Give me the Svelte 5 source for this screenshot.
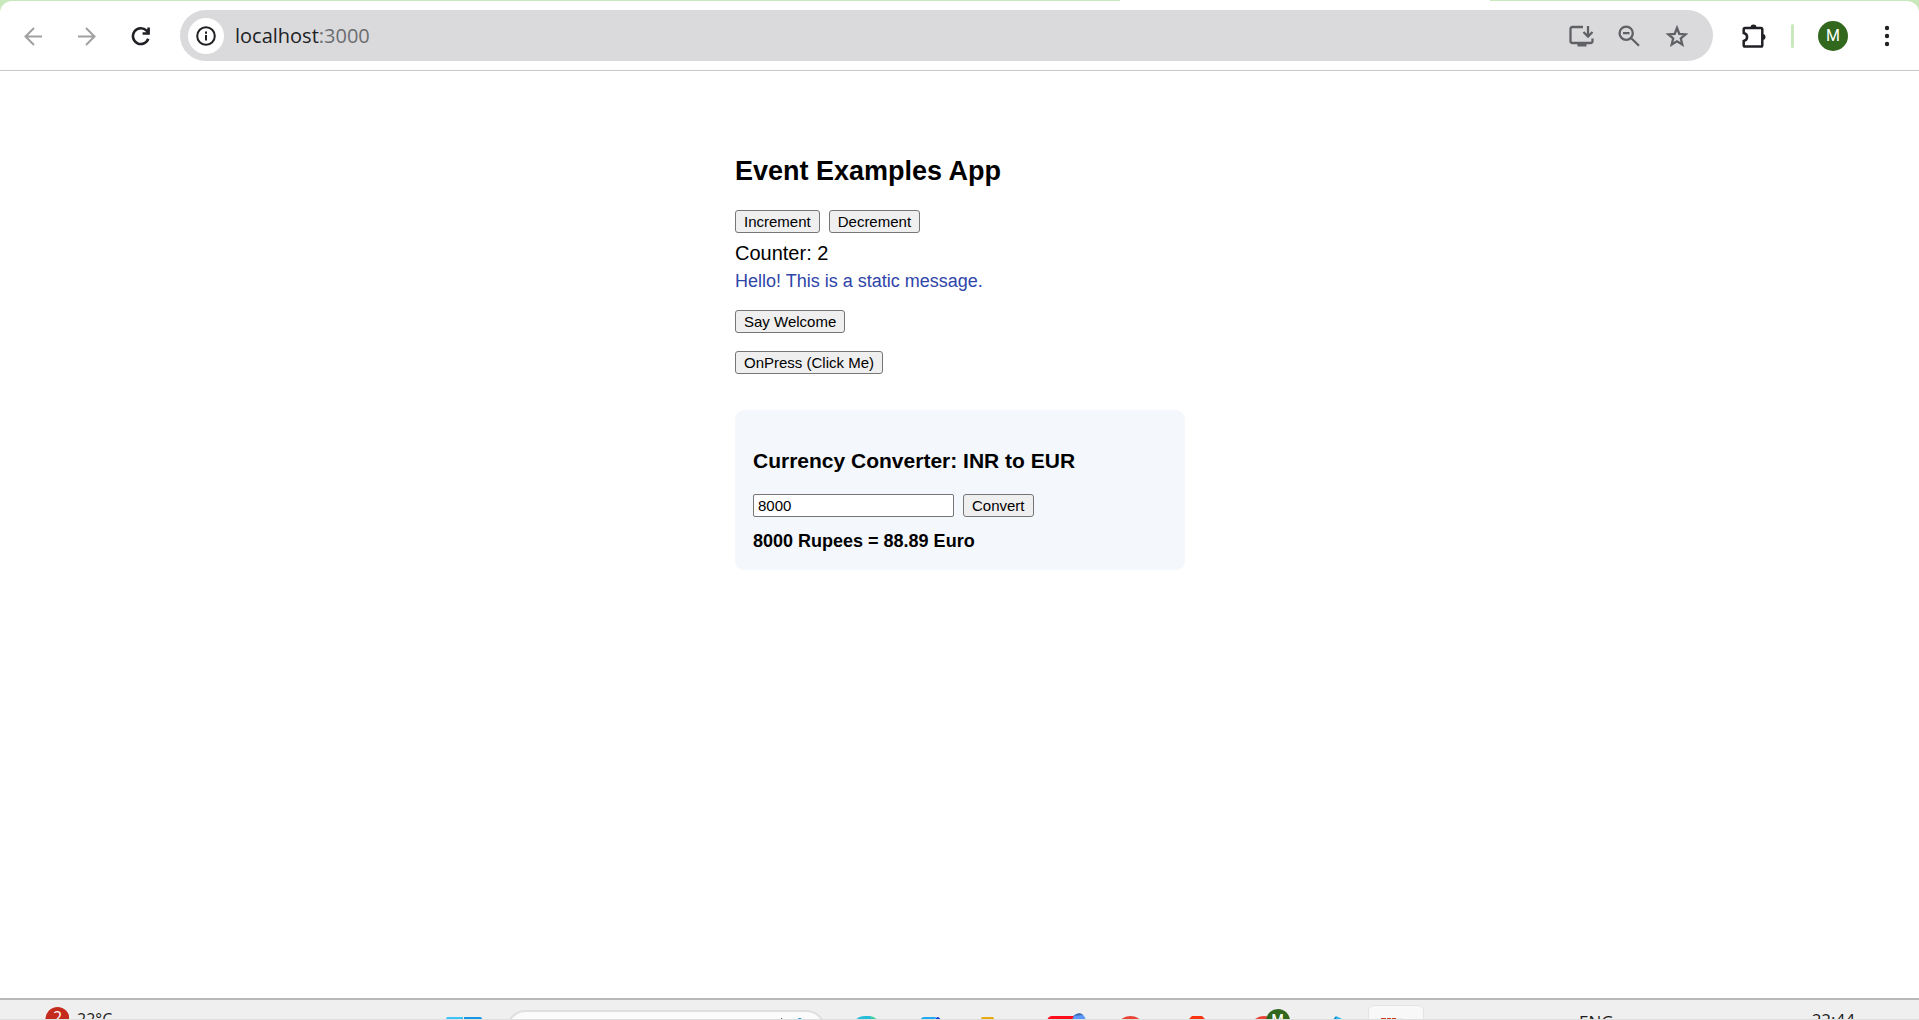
<script>
  let count = $state(2);
  let amount = $state('8000');
  let rupees = $state(8000);
  const euros = $derived((rupees / 90).toFixed(2));
</script>

<div class="window">
  <header>
    <div class="tabs"><span class="tab"></span></div>
    <div class="toolbar">
      <nav class="nav">
        <button class="tool muted" aria-label="Back">
          <svg width="20" height="20" viewBox="0 0 20 20"><path d="M19 10.500H3M11 2l-8.500 8.500L11 19" /></svg>
        </button>
        <button class="tool muted" aria-label="Forward">
          <svg width="20" height="20" viewBox="0 0 20 20"><path d="M1 10.500h16M9 2l8.500 8.500L9 19" /></svg>
        </button>
        <button class="tool" aria-label="Reload">
          <svg width="20" height="20" viewBox="0 0 20 20" class="bold"><path d="M17.300 12.800A7.900 7.900 0 1 1 15.600 4.700L17.600 6.800M17.600 1.500v6h-6" /></svg>
        </button>
      </nav>

      <div class="address">
        <button class="site" aria-label="Site information">
          <svg width="20" height="20" viewBox="0 0 20 20"><circle cx="10" cy="10" r="8.800" /><path d="M10 9v5.500M10 5.500v2.200" /></svg>
        </button>
        <span class="url">localhost<span class="port">:3000</span></span>
        <div class="actions">
          <button class="tool grey" aria-label="Install app">
            <svg width="26" height="24" viewBox="0 0 26 24">
              <path d="M15 3H4.500Q2.500 3 2.500 5v12q0 2 2 2h18q2 0 2-2v-2.500" />
              <path d="M20 2v10M15.500 8l4.500 4.500L24.500 8" />
              <path class="solid" d="M9.500 19h9v3.500h-9z" />
            </svg>
          </button>
          <button class="tool grey" aria-label="Zoom">
            <svg width="24" height="24" viewBox="0 0 24 24"><circle cx="9.200" cy="9.200" r="6.600" /><path d="M14 14l8 7.800M6 9.200h6.500" /></svg>
          </button>
          <button class="tool grey" aria-label="Bookmark this tab">
            <svg width="24" height="24" viewBox="0 0 24 24"><path d="M12 4l2.300 5.900 6.300.5-4.800 4.100 1.500 6.100-5.300-3.300-5.300 3.300 1.500-6.100-4.800-4.100 6.300-.5z" /></svg>
          </button>
        </div>
      </div>

      <button class="tool puzzle" aria-label="Extensions">
        <svg width="26" height="26" viewBox="0 0 26 26">
          <path d="M4 5h16q1.300 0 1.300 1.300v16q0 1.300-1.300 1.300H4q-1.300 0-1.300-1.300V18c4.500-1 4.500-7 0-8V6.300Q2.700 5 4 5z" />
          <path class="solid" d="M9.500 4.500a3 3 0 0 1 6 0zM21.500 11a3 3 0 0 1 0 6z" />
        </svg>
      </button>
      <span class="divider"></span>
      <button class="avatar" aria-label="Profile">M</button>
      <button class="tool" aria-label="Menu">
        <svg width="24" height="24" viewBox="0 0 24 24"><g class="solid"><circle cx="12" cy="4" r="2.200" /><circle cx="12" cy="12" r="2.200" /><circle cx="12" cy="20" r="2.200" /></g></svg>
      </button>
    </div>
  </header>

  <main>
    <h2>Event Examples App</h2>
    <div class="row">
      <button class="btn" onclick={() => (count += 1)}>Increment</button>
      <button class="btn" onclick={() => (count -= 1)}>Decrement</button>
    </div>
    <div class="counter">Counter: {count}</div>
    <div class="hello">Hello! This is a static message.</div>
    <div class="single"><button class="btn">Say Welcome</button></div>
    <div class="single"><button class="btn">OnPress (Click Me)</button></div>

    <section class="card">
      <h3>Currency Converter: INR to EUR</h3>
      <div class="row">
        <input aria-label="Amount in rupees" bind:value={amount} />
        <button class="btn" onclick={() => (rupees = Number(amount))}>Convert</button>
      </div>
      <div class="result">{rupees} Rupees = {euros} Euro</div>
    </section>
  </main>

  <footer>
    <div class="bar">
      <div class="weather">
        <svg width="33" height="50" viewBox="0 0 33 50">
          <circle cx="16" cy="26" r="14" fill="#fbc400" />
          <circle cx="21.500" cy="13" r="12" fill="#c42b1c" />
        </svg>
        <span class="badge">2</span>
        <span class="temp">22°C</span>
      </div>

      <div class="apps">
        <button class="app" aria-label="Start">
          <svg width="36" height="36" viewBox="0 0 36 36"><path fill="#3fc4f7" d="M0 7q0-2 2-2h15v14H0z" /><path fill="#1597e5" d="M18 5h16q2 0 2 2v12H18z" /></svg>
        </button>
        <div class="search">
          <svg width="36" height="36" viewBox="0 0 36 36"><path fill="#2b1b24" d="M3 9l4-3 1 6H4z" /><path fill="#1597d4" d="M20 10q5-8 9 0z" /></svg>
        </div>
        <button class="app" aria-label="Copilot">
          <svg width="36" height="36" viewBox="0 0 36 36"><path fill="#26bddb" d="M3 11Q7 4 15 4h5l8 7z" /><path fill="#42cfa0" d="M20 4q6 1 9 6h-6z" /></svg>
        </button>
        <button class="app" aria-label="Mail">
          <svg width="36" height="36" viewBox="0 0 36 36"><path fill="#21aaf0" d="M4 12q0-7 4-7h12l-2 7z" /><path fill="#1136d6" d="M18 9l3-4q4 0 4 6h-6z" /></svg>
        </button>
        <button class="app" aria-label="Files">
          <svg width="36" height="36" viewBox="0 0 36 36"><path fill="#e8a90c" d="M-1 7q0-2 2-2h10l3 5H-1z" /></svg>
        </button>
        <button class="app" aria-label="Videos">
          <svg width="40" height="36" viewBox="0 0 40 36"><path fill="#ff0d1b" d="M1 11Q1 4 6 4h24v8H1z" /><circle cx="33" cy="8" r="6.500" fill="#5d98fa" /><path fill="#386cae" d="M27 4q5-4 9-2l1 1z" /></svg>
        </button>
        <button class="app" aria-label="Chrome">
          <svg width="36" height="36" viewBox="0 0 36 36"><circle cx="16.500" cy="19" r="15" fill="#e94335" /></svg>
        </button>
        <button class="app" aria-label="Brave">
          <svg width="36" height="36" viewBox="0 0 36 36"><path fill="#fb3512" d="M6 7h3l3-3h10l3 3h4l2 5H5z" /></svg>
        </button>
        <button class="app" aria-label="Chrome, profile M">
          <svg width="52" height="52" viewBox="0 0 52 52"><circle cx="26" cy="27" r="15" fill="#e94335" /><circle cx="40" cy="17" r="12" fill="#31681d" /></svg>
          <span class="mini">M</span>
        </button>
        <button class="app" aria-label="Editor">
          <svg width="36" height="36" viewBox="0 0 36 36"><path fill="#1186c6" d="M20 9l4-5v8h-4z" /><path fill="#2bb3f6" d="M24 4l8 4v4h-8z" /></svg>
        </button>
        <button class="app active" aria-label="Screen clip">
          <svg width="36" height="36" viewBox="0 0 36 36"><path fill="#e6ecef" d="M3 6h21l4 6H3z" /><path fill="#cf3f1e" d="M3 6h5v4H3zM9 6h4v4H9zM14 6h4v4h-4z" /></svg>
        </button>
      </div>

      <div class="tray">
        <span class="lang">ENG</span>
        <span class="time">22:44</span>
      </div>
    </div>
  </footer>
</div>

<style>
  :global(body) { background: #fff; }
  .window { min-height: 100vh; display: flex; flex-direction: column; font-family: "Liberation Sans", Arial, sans-serif; color: #000; }
  button { font-family: inherit; }
  header { background: #c9e9bc; }
  .tabs { height: 1px; display: flex; justify-content: flex-end; padding-right: 429px; }
  .tab { width: 370px; background: #fff; }
  .toolbar { display: flex; align-items: center; padding: 9px 10px 9px 11px; background: #fff; border-bottom: 1px solid #c8c8ca; border-radius: 12px 12px 0 0; }
  .nav { display: flex; gap: 10px; margin-right: 17px; }
  .tool { display: flex; align-items: center; justify-content: center; width: 44px; height: 44px; padding: 0; border: 0; background: none; color: #202124; }
  .muted { color: #a0a0a1; }
  .grey { width: 40px; color: #5f6164; }
  .toolbar svg { fill: none; stroke: currentColor; stroke-width: 2; }
  .toolbar .grey svg { stroke-width: 2.3; }
  .toolbar .bold { stroke-width: 2.6; }
  .toolbar .solid { fill: currentColor; stroke: none; }
  .address { flex: 1; display: flex; align-items: center; height: 51px; padding: 0 16px 0 8px; border-radius: 26px; background: #dadadc; }
  .site { display: flex; align-items: center; justify-content: center; width: 36px; height: 36px; padding: 0; border: 0; border-radius: 50%; background: #fff; color: #202124; }
  .url { flex: 1; margin-left: 11px; font: 20px/28px "Open Sans", "Noto Sans", sans-serif; color: #202124; }
  .port { color: #6b6d70; }
  .actions { display: flex; gap: 8px; }
  .puzzle { margin-left: 19px; }
  .toolbar .puzzle svg { stroke-width: 2.5; }
  .divider { width: 3px; height: 24px; margin: 0 24px 0 15px; border-radius: 2px; background: #c9e9bc; }
  .avatar { width: 30px; height: 30px; margin-right: 17px; padding: 0; border: 0; border-radius: 50%; background: #31681d; color: #fff; font: 400 16px/30px Roboto, sans-serif; }

  main { flex: 1; width: 450px; margin: 0 auto; padding: 85px 0 0 1px; }
  h2 { margin: 0 0 23px; font-size: 27px; line-height: 31px; }
  .row { display: flex; gap: 9px; }
  .btn { height: 23px; padding: 0 8px; border: 1px solid #767676; border-radius: 3px; background: #efefef; color: #000; font-size: 15px; line-height: 20px; }
  .counter { margin-top: 9px; font-size: 20px; line-height: 23px; }
  .hello { margin-top: 6px; font-size: 18px; line-height: 21px; color: #2f45a8; }
  .single { display: flex; margin-top: 18px; }
  .card { margin-top: 36px; padding: 39px 18px 18px; border-radius: 9px; background: #f4f7fc; }
  h3 { margin: 0 0 21px; font-size: 21px; line-height: 24px; }
  input { box-sizing: border-box; width: 201px; height: 23px; padding: 0 4px; border: 1px solid #767676; border-radius: 2px; background: #fff; color: #000; font: 15px/20px "Liberation Sans", Arial, sans-serif; }
  .result { margin-top: 14px; font-size: 18px; line-height: 21px; font-weight: 700; }

  footer { height: 19px; overflow: hidden; border-top: 2px solid #b9b9b9; border-bottom: 1px solid #dfdfdf; background: #efefef; }
  .bar { display: grid; grid-template-columns: 1fr auto 1fr; height: 60px; padding-right: 60px; }
  .weather { position: relative; display: flex; align-items: flex-start; gap: 8px; padding: 6px 0 0 36px; }
  .badge { position: absolute; left: 53px; top: 7px; color: #fff; font: 16px/20px "Open Sans", sans-serif; }
  .temp { padding-top: 2px; font: 16px/22px "Open Sans", sans-serif; color: #1c1c1c; }
  .apps { display: flex; align-items: center; gap: 10px; }
  .app { position: relative; display: flex; align-items: center; justify-content: center; width: 56px; height: 50px; padding: 0; border: 0; background: none; }
  .app svg { flex: none; overflow: visible; }
  .active { box-sizing: border-box; border: 1px solid #e3e3e3; border-radius: 6px; background: #f8f8f8; }
  .search { box-sizing: border-box; display: flex; align-items: center; justify-content: flex-end; width: 320px; height: 40px; margin: 0 4px; padding-right: 13px; border: 2px solid #dfdfdf; border-radius: 20px; background: #fbfbfb; }
  .mini { position: absolute; left: 36px; top: 7px; color: #fff; font: 500 14px/16px Roboto, sans-serif; }
  .tray { display: flex; justify-content: flex-end; align-items: flex-start; padding: 9px 4px 0 0; font: 17px/22px "Open Sans", sans-serif; color: #1c1c1c; }
  .lang { padding-top: 2px; margin-right: 198px; }
</style>
